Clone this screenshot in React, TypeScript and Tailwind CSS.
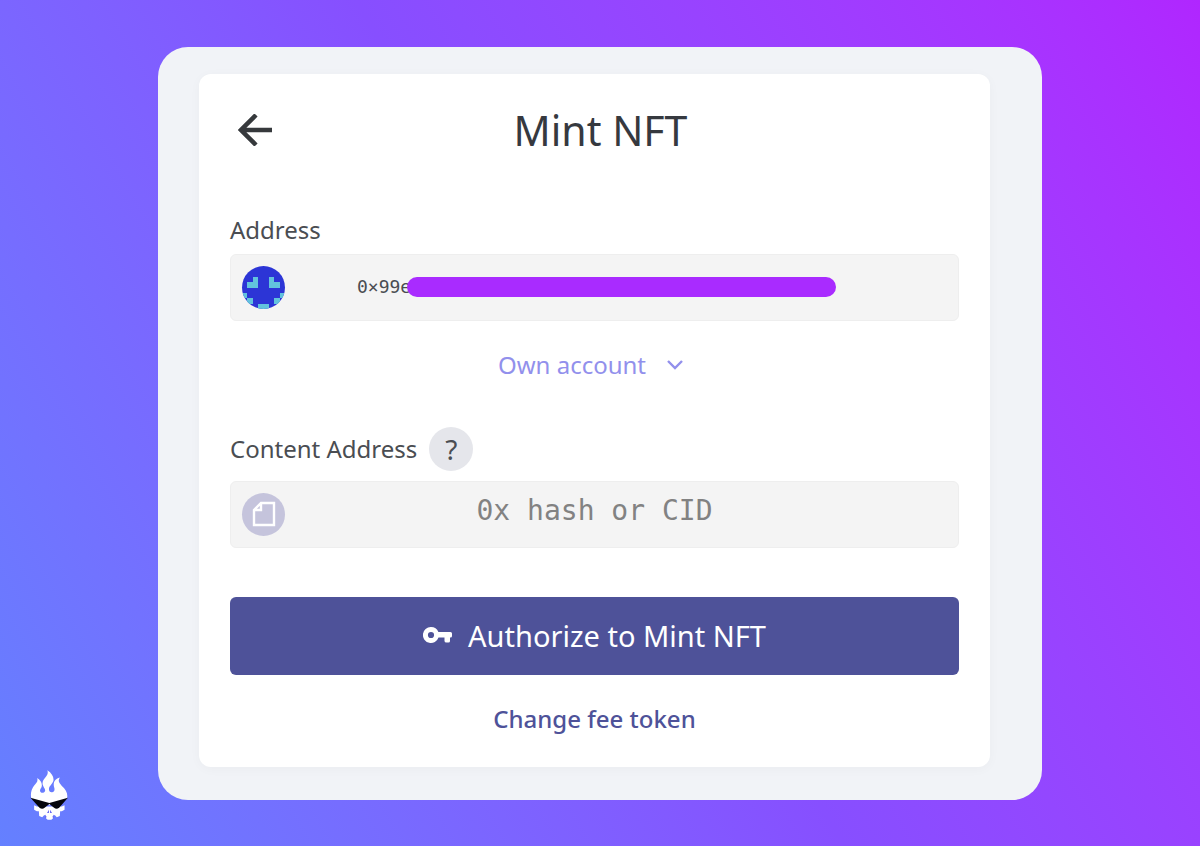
import React from "react";

const avatarCells = [
  [2, 2], [5, 2],
  [1, 3], [2, 3], [5, 3], [6, 3],
  [0, 5], [7, 5],
  [1, 6], [6, 6],
  [3, 7], [4, 7],
];

const Avatar: React.FC = () => (
  <svg viewBox="0 0 8 8" shapeRendering="crispEdges" className="w-[43px] h-[43px] rounded-full bg-[#2c35d6]">
    {avatarCells.map(([x, y]) => (
      <rect key={`${x}-${y}`} x={x} y={y} width="1" height="1" fill="#62c3dd" />
    ))}
  </svg>
);

const KeyIcon: React.FC = () => (
  <svg viewBox="0 0 29 17" className="h-[17px] w-[29px]" fill="#fff" aria-hidden="true">
    <path
      fillRule="evenodd"
      d="M8 0A8 8 0 0 1 15.400 5H27.500Q29 5 29 6.500V9Q29 10.500 27.500 10.500H27V14Q27 15.500 25.500 15.500H23.500Q21.500 15.500 21.500 14V10.500H15.500A8 8 0 1 1 8 0ZM8 4.900A3.100 3.100 0 1 0 8 11.100A3.100 3.100 0 1 0 8 4.900Z"
    />
  </svg>
);

const FlameSkull: React.FC = () => (
  <svg viewBox="30 30 112 148" className="w-[38px] h-[50px]" aria-hidden="true">
    <path
      fill="#fff"
      d="M34 116C30 100 34 87 41 77C49 67 54 64 51 54C62 60 67 71 64 80C62 85 58 88 60 94C62 99 71 99 74 93C77 87 69 81 67 72C65 54 88 48 81 31C95 40 101 52 99 62C97 71 87 77 86 85C85 92 89 97 95 96C102 95 104 88 101 80C97 66 105 55 118 52C112 62 115 68 124 77C137 88 143 101 139 116L87 134Z"
    />
    <path
      fill="#fff"
      d="M50 138H124L132 134V148L124 152H119L118 166L109 170L103 163L98 166V173L93 177H82L77 173V166L72 163L66 170L57 166L56 152H50L42 148V134Z"
    />
    <path fill="#05060c" d="M31 112L87 128L142 112L116 142Q108 148 101 142L87 131L73 142Q66 148 58 142Z" />
    <path fill="#6b6cf5" d="M86 148L80 157H86ZM89 148L95 157H89ZM75 162L79 169L74 174ZM100 162L96 169L101 174Z" />
  </svg>
);

const App: React.FC = () => {
  return (
    <div className="relative flex min-h-screen items-center justify-center bg-linear-60 from-[#6480ff] via-[#874fff] to-[#b026ff] font-['Noto_Sans',sans-serif] text-[#4a4d52]">
      <main className="w-full max-w-[884px] rounded-[30px] bg-[#f1f3f7] pt-[27px] pr-[52px] pb-[33px] pl-[41px]">
        <form className="rounded-xl bg-white px-[31px] py-8 shadow-[0_2px_12px_rgba(0,0,0,0.03)]">
          <header className="flex h-12 items-center">
            <button type="button" aria-label="Back" className="flex h-12 w-12 items-center pl-2">
              <svg viewBox="0 0 34 32" className="h-8 w-[34px]" fill="none" stroke="#36393c" strokeWidth="4.5">
                <path d="M34 16H3M18 1L3 16L18 31" />
              </svg>
            </button>
            <h1 className="mr-9 flex-1 text-center text-[41px] leading-[44px] text-[#36393f]">Mint NFT</h1>
          </header>

          <label htmlFor="address" className="mt-[60px] block text-2xl">Address</label>
          <div className="relative mt-2 flex h-[67px] items-center rounded-md border border-[#eeeeee] bg-[#f4f4f4] px-[11px]">
            <Avatar />
            <input
              id="address"
              readOnly
              defaultValue="0×99e"
              className="ml-[72px] min-w-0 flex-1 bg-transparent font-['DejaVu_Sans_Mono',monospace] text-lg outline-none"
            />
            <span className="absolute right-[122px] left-44 h-5 rounded-full bg-[#a92bff]"></span>
          </div>

          <div className="mt-7 flex justify-center">
            <div className="relative flex items-center">
              <select aria-label="Account" className="mr-2 appearance-none bg-transparent pr-9 text-2xl text-[#9290ec] outline-none">
                <option>Own account</option>
              </select>
              <svg viewBox="0 0 16 10" className="pointer-events-none absolute right-2 h-[10px] w-4" fill="none" stroke="#9290ec" strokeWidth="2.4">
                <path d="M1 1L8 8L15 1" />
              </svg>
            </div>
          </div>

          <div className="mt-[46px] flex h-11 items-center gap-3">
            <label htmlFor="content" className="text-2xl">Content Address</label>
            <button type="button" aria-label="Help" className="h-11 w-11 rounded-full bg-[#e5e6eb] text-[28px] leading-[44px]">?</button>
          </div>
          <div className="relative mt-[10px] flex h-[67px] items-center rounded-md border border-[#eeeeee] bg-[#f4f4f4]">
            <input
              id="content"
              placeholder="0x hash or CID"
              className="h-full w-full bg-transparent pb-2 text-center font-['DejaVu_Sans_Mono',monospace] text-[28px] outline-none placeholder:text-[#828282]"
            />
            <span className="pointer-events-none absolute left-[11px] flex h-[43px] w-[43px] items-center justify-center rounded-full bg-[#c5c4dc]">
              <svg viewBox="0 0 24 26" className="h-[26px] w-6" fill="none" stroke="#fff" strokeWidth="2.4">
                <path d="M9 2H22V24H2V9ZM9 2V9H2" />
              </svg>
            </span>
          </div>

          <button type="submit" className="mt-[49px] flex h-[78px] w-full items-center justify-center gap-4 rounded-md bg-[#4e5299] text-[29px] text-white">
            <KeyIcon />
            Authorize to Mint NFT
          </button>
          <button type="button" className="mx-auto mt-7 block text-2xl font-medium text-[#4e5299]">Change fee token</button>
        </form>
      </main>
      <div className="absolute bottom-[26px] left-[30px]">
        <FlameSkull />
      </div>
    </div>
  );
};

export default App;
